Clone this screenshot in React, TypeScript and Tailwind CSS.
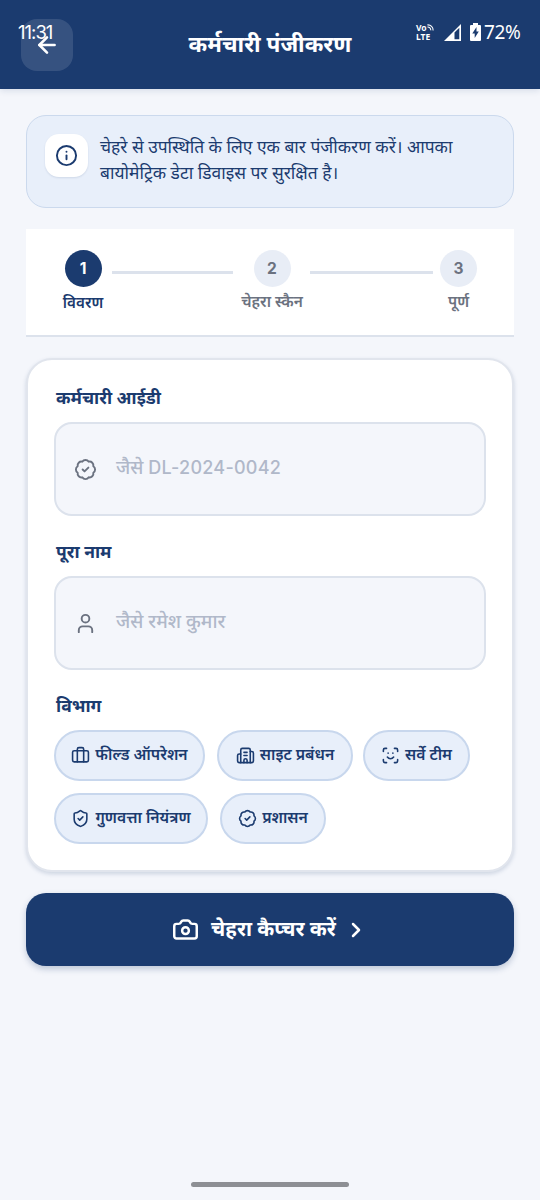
import React, { ReactNode } from 'react';
import {
  ArrowLeft,
  BadgeCheck,
  Briefcase,
  Building2,
  Camera,
  ChevronRight,
  Info,
  LucideIcon,
  ScanFace,
  ShieldCheck,
  User,
} from 'lucide-react';

const steps = [
  { id: 1, label: 'विवरण', active: true, className: 'w-[114px]' },
  { id: 2, label: 'चेहरा स्कैन', active: false, className: 'w-[76px]' },
  { id: 3, label: 'पूर्ण', active: false, className: 'w-[51px]' },
];

const departments = [
  { name: 'फील्ड ऑपरेशन', icon: Briefcase, className: 'w-[151px]' },
  { name: 'साइट प्रबंधन', icon: Building2, className: 'w-[136px]' },
  { name: 'सर्वे टीम', icon: ScanFace, className: 'w-[107px] -ml-0.5' },
  { name: 'गुणवत्ता नियंत्रण', icon: ShieldCheck, className: 'w-[154px]' },
  { name: 'प्रशासन', icon: BadgeCheck, className: 'w-[106px]' },
];

function StatusBar() {
  return (
    <div className="absolute inset-x-0 top-0 h-16 text-white">
      <span className="absolute left-[18px] top-[20px] font-['Inter',sans-serif] text-[18.5px] leading-6 tracking-[-1px]">
        11:31
      </span>
      <div className="absolute right-[20px] top-[20px] flex h-6 items-center">
        <div className="relative mr-[10px] h-[18px] w-[18px] text-[8.5px] font-bold">
          <div className="h-[9px] w-[11px] leading-[9px]">Vo</div>
          <div className="h-[9px] leading-[9px]">LTE</div>
          <svg
            className="absolute left-[11px] top-[1px] h-[7px] w-[7px]"
            viewBox="0 0 8 8"
            fill="none"
            stroke="currentColor"
            strokeWidth="1.2"
          >
            <path d="M0.5 1 A6 6 0 0 1 7 7.5 M0.5 3.5 A3.5 3.5 0 0 1 4.3 7.3" />
          </svg>
        </div>
        <svg className="mr-[9px] h-[17px] w-[17px]" viewBox="0 0 17 17">
          <path d="M0 17 L17 0 V17 Z" fill="currentColor" />
          <path d="M10.5 8.5 L15.3 3.8 V15.3 H10.5 Z" fill="#1b3b6f" />
        </svg>
        <svg className="mr-[3px] h-[18px] w-[11px]" viewBox="0 0 11 18">
          <path
            d="M3 0 H8 V2 H10 Q11 2 11 3 V17 Q11 18 10 18 H1 Q0 18 0 17 V3 Q0 2 1 2 H3 Z"
            fill="currentColor"
          />
          <path d="M6.5 4 L2.3 10.4 H4.7 V15 L8.8 8.6 H6.5 Z" fill="#1b3b6f" />
        </svg>
        <span className="w-[36px] whitespace-nowrap text-[19px] leading-6 tracking-[-0.4px]">
          72%
        </span>
      </div>
    </div>
  );
}

function Field({
  label,
  placeholder,
  icon: Icon,
}: {
  label: string;
  placeholder: ReactNode;
  icon: LucideIcon;
}) {
  return (
    <div className="mb-6">
      <h3 className="mb-[13px] pl-0.5 text-[17.5px] font-bold leading-[23px] text-[#1b3b6f]">
        {label}
      </h3>
      <div className="flex h-[94px] items-center rounded-[18px] border-2 border-[#dce2ec] bg-[#f4f6fb] pl-[18px]">
        <Icon size={23} className="text-[#6b7280]" />
        <span className="mb-1 ml-[19px] text-[18.9px] font-medium leading-6 text-[#b0b8c9]">
          {placeholder}
        </span>
      </div>
    </div>
  );
}

function App() {
  return (
    <div className="relative h-[1200px] w-[540px] overflow-hidden bg-[#f4f6fb] font-['Noto_Sans','Noto_Sans_Devanagari',sans-serif]">
      <header className="relative flex h-[89px] items-start bg-[#1b3b6f] px-[21px] pt-[19px] text-white shadow-[0_2px_6px_rgba(27,59,111,0.12)]">
        <button className="flex h-[52px] w-[52px] items-center justify-center rounded-[16px] bg-white/12">
          <ArrowLeft size={26} strokeWidth={2.4} />
        </button>
        <h1 className="flex-1 pr-[52px] text-center text-[22.5px] font-bold leading-[50px]">
          कर्मचारी पंजीकरण
        </h1>
        <StatusBar />
      </header>

      <main className="px-[26px] pt-[26px]">
        <div className="flex h-[93px] rounded-[20px] border-[1.5px] border-[#cbd9ed] bg-[#e8effa] pl-[18px] pt-[18px]">
          <div className="flex h-[43px] w-[43px] shrink-0 items-center justify-center rounded-[14px] bg-white shadow-[0_1px_2px_rgba(27,59,111,0.12)]">
            <Info size={23} className="text-[#1b3b6f]" />
          </div>
          <p className="-mt-px ml-[12px] whitespace-nowrap text-[17.4px] leading-[26px] text-[#1b3b6f]">
            चेहरे से उपस्थिति के लिए एक बार पंजीकरण करें। आपका
            <br />
            बायोमेट्रिक डेटा डिवाइस पर सुरक्षित है।
          </p>
        </div>

        <div className="mt-[21px] flex h-[108px] border-b-2 border-[#dce2ec] bg-white pt-[21px]">
          {steps.map((step) => (
            <React.Fragment key={step.id}>
              <div
                className={`flex shrink-0 flex-col items-center ${step.className} ${
                  step.active ? 'text-[#1b3b6f]' : 'text-[#6b7280]'
                }`}
              >
                <div
                  className={`flex h-[37px] w-[37px] items-center justify-center rounded-full font-['Inter',sans-serif] text-[15.5px] font-bold ${
                    step.active ? 'bg-[#1b3b6f] text-white' : 'bg-[#e8edf6]'
                  }`}
                >
                  {step.id}
                </div>
                <span
                  className={`mt-[3px] whitespace-nowrap leading-6 ${
                    step.active
                      ? 'text-[15.2px] font-semibold'
                      : 'text-[15.4px] font-semibold'
                  }`}
                >
                  {step.label}
                </span>
              </div>
              {step.id === 1 && (
                <div className="ml-[-28px] mr-[1px] mt-[21px] h-[3px] w-[121px] shrink-0 bg-[#dce2ec]" />
              )}
              {step.id === 2 && (
                <div className="mt-[21px] h-[3px] w-[123px] shrink-0 bg-[#dce2ec]" />
              )}
            </React.Fragment>
          ))}
        </div>

        <div className="mt-[21px] h-[514px] rounded-[26px] border-2 border-[#e1e5ed] bg-white px-[26px] pt-[26px] shadow-[0_2px_4px_rgba(27,59,111,0.18)]">
          <Field
            label="कर्मचारी आईडी"
            icon={BadgeCheck}
            placeholder={
              <>
                जैसे{' '}
                <span className="font-['Inter',sans-serif] text-[18px] font-medium tracking-[0.25px]">
                  DL-2024-0042
                </span>
              </>
            }
          />
          <Field label="पूरा नाम" icon={User} placeholder="जैसे रमेश कुमार" />
          <h3 className="mb-[13px] pl-0.5 text-[17.5px] font-bold leading-[23px] text-[#1b3b6f]">
            विभाग
          </h3>
          <div className="flex flex-wrap gap-3">
            {departments.map(({ name, icon: Icon, className }) => (
              <button
                key={name}
                className={`flex h-[51px] items-center justify-center gap-[5px] whitespace-nowrap rounded-full border-2 border-[#c8d7ed] bg-[#e8effa] pb-px text-[15.7px] font-semibold text-[#1b3b6f] ${className}`}
              >
                <Icon size={19} className="shrink-0" />
                {name}
              </button>
            ))}
          </div>
        </div>

        <button className="mt-[21px] flex h-[73px] w-full items-center justify-center rounded-[20px] bg-[#1b3b6f] text-white shadow-[0_3px_6px_rgba(27,59,111,0.25)]">
          <Camera size={27} strokeWidth={2.2} />
          <span className="mb-1 ml-[12px] mr-[8px] text-[20.5px] font-bold leading-7">
            चेहरा कैप्चर करें
          </span>
          <ChevronRight size={24} strokeWidth={2.5} />
        </button>
      </main>

      <div className="absolute bottom-[13px] left-[191px] h-[5px] w-[158px] rounded-full bg-[#8d8f94]" />
    </div>
  );
}
export default App;
